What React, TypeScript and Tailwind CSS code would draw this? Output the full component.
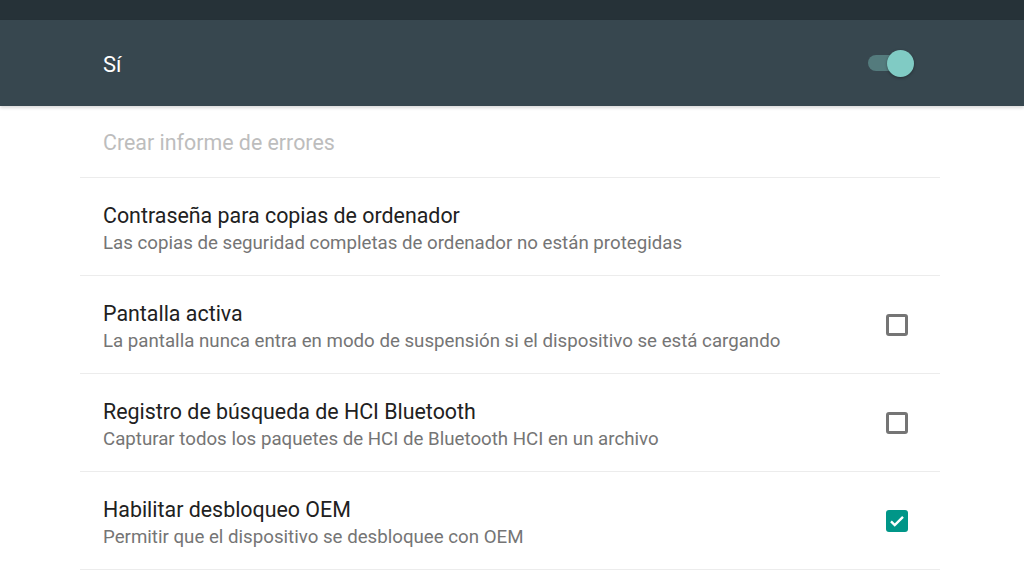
import React from "react";

type Row = {
  title: string;
  summary: string;
  checked?: boolean;
};

const rows: Row[] = [
  {
    title: "Contraseña para copias de ordenador",
    summary: "Las copias de seguridad completas de ordenador no están protegidas",
  },
  {
    title: "Pantalla activa",
    summary:
      "La pantalla nunca entra en modo de suspensión si el dispositivo se está cargando",
    checked: false,
  },
  {
    title: "Registro de búsqueda de HCI Bluetooth",
    summary: "Capturar todos los paquetes de HCI de Bluetooth HCI en un archivo",
    checked: false,
  },
  {
    title: "Habilitar desbloqueo OEM",
    summary: "Permitir que el dispositivo se desbloquee con OEM",
    checked: true,
  },
];

const CheckBox = ({ checked }: { checked: boolean }) =>
  checked ? (
    <div className="w-[22px] h-[22px] rounded-[3px] bg-[#009688] flex items-center justify-center">
      <svg width="18" height="18" viewBox="0 0 24 24">
        <path
          d="M4 12.5l5 5L20 6.5"
          fill="none"
          stroke="white"
          strokeWidth="3.2"
        />
      </svg>
    </div>
  ) : (
    <div className="w-[22px] h-[22px] rounded-[3px] border-[3px] border-[#757575]" />
  );

const App = () => {
  return (
    <div
      className="w-[1024px] h-[576px] overflow-hidden bg-white"
      style={{ fontFamily: "Roboto, 'Noto Sans', sans-serif" }}
    >
      <div className="h-[20px] bg-[#263238]" />
      <div className="h-[86px] bg-[#37474f] flex items-center justify-between pl-[103px] pr-[110px] shadow-[0_2px_3px_rgba(0,0,0,0.15)]">
        <span className="text-white text-[22px] pt-[2px]">Sí</span>
        <div className="relative w-[46px] h-[27px]">
          <div className="absolute left-0 top-[5.5px] w-[36px] h-[16px] rounded-full bg-[#80cbc4]/40" />
          <div className="absolute right-0 top-0 w-[27px] h-[27px] rounded-full bg-[#80cbc4] shadow-[0_1px_3px_rgba(0,0,0,0.35)]" />
        </div>
      </div>
      <div className="ml-[80px] mr-[84px]">
        <div className="h-[72px] border-b border-[#ececec] flex items-center pl-[23px] pt-[4px]">
          <span className="text-[21.4px] text-[#bdbdbd]">Crear informe de errores</span>
        </div>
        {rows.map((row) => (
          <div
            key={row.title}
            className="h-[98px] border-b border-[#ececec] flex items-center justify-between pl-[23px] pr-[32px]"
          >
            <div className="flex flex-col pt-[5px]">
              <span className="text-[21.4px] leading-[28px] text-[#212121]">
                {row.title}
              </span>
              <span className="text-[18.7px] leading-[26px] text-[#757575]">
                {row.summary}
              </span>
            </div>
            {row.checked !== undefined && <CheckBox checked={row.checked} />}
          </div>
        ))}
      </div>
    </div>
  );
};

export default App;
